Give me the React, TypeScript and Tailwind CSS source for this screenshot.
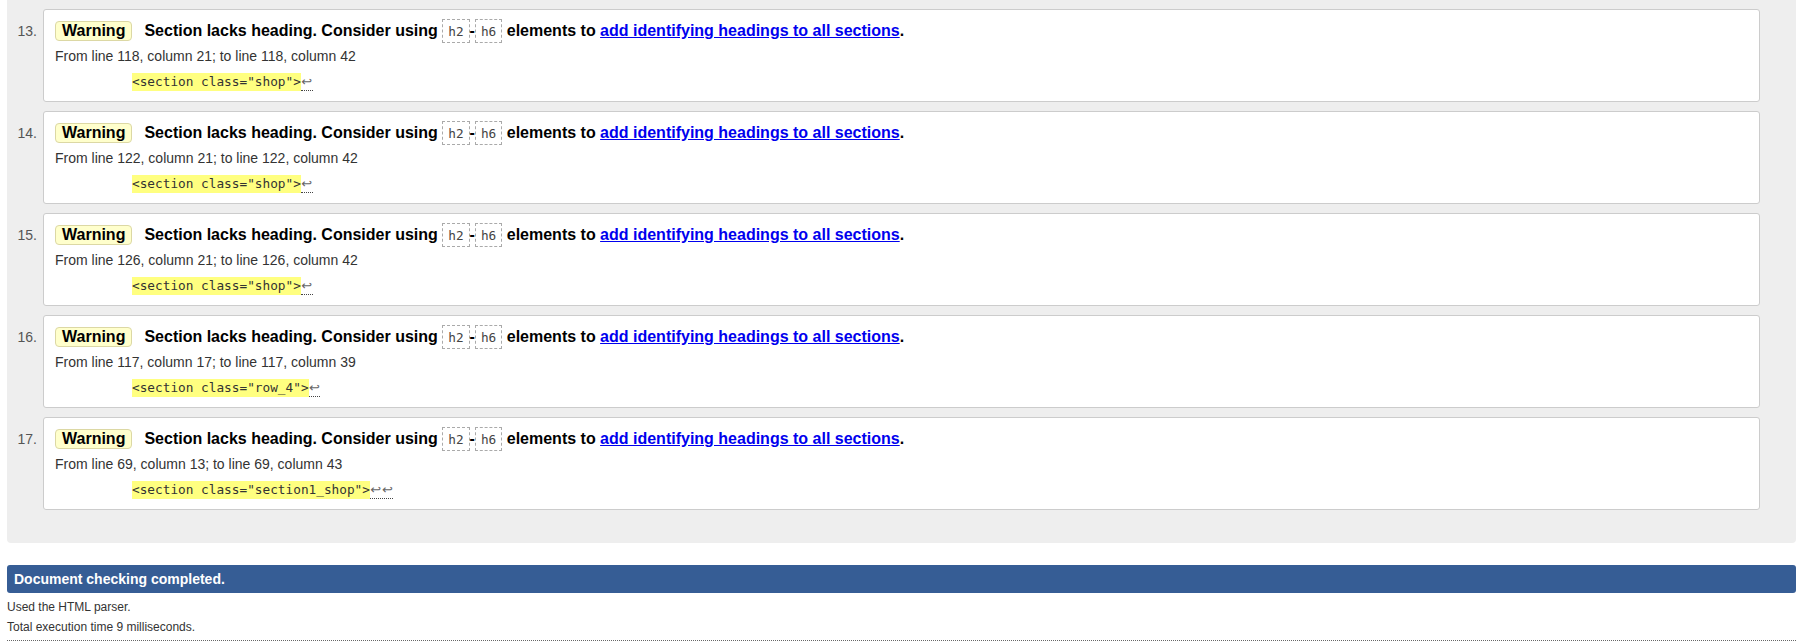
type Message = {
    num: number;
    fromLine: number;
    fromCol: number;
    toLine: number;
    toCol: number;
    cls: string;
    returns: number;
};

const messages: Message[] = [
    { num: 13, fromLine: 118, fromCol: 21, toLine: 118, toCol: 42, cls: "shop", returns: 1 },
    { num: 14, fromLine: 122, fromCol: 21, toLine: 122, toCol: 42, cls: "shop", returns: 1 },
    { num: 15, fromLine: 126, fromCol: 21, toLine: 126, toCol: 42, cls: "shop", returns: 1 },
    { num: 16, fromLine: 117, fromCol: 17, toLine: 117, toCol: 39, cls: "row_4", returns: 1 },
    { num: 17, fromLine: 69, fromCol: 13, toLine: 69, toCol: 43, cls: "section1_shop", returns: 2 },
];

const sans = "font-['Liberation_Sans',Arial,sans-serif]";
const mono = "font-['DejaVu_Sans_Mono','Liberation_Mono',monospace]";

const TagBox = ({ children }: { children: string }) => (
    <code
        className={`inline-block border border-dashed border-[#aaa] px-[5px] pt-[3px] pb-[1px] leading-[18px] text-[12.75px] font-normal text-[#444] ${mono}`}
    >
        {children}
    </code>
);

const MessageRow = ({ msg }: { msg: Message }) => (
    <div className="flex">
        <div className="w-[36px] shrink-0 pt-[10px] pr-[6px] text-right text-[14px] leading-[24px] text-[#555]">
            {msg.num}.
        </div>
        <div className="flex-1 bg-white border border-[#ccc] rounded-[3px] pl-[11px] pt-[9px] pb-[10px]">
            <div className="h-[24px] leading-[24px] text-[16px] font-bold text-black whitespace-nowrap">
                <span className="inline-block bg-[#ffffcc] border border-[#dcd8a4] rounded-[4px] px-[6px] leading-[18px] mr-[12px]">
                    Warning
                </span>
                Section lacks heading. Consider using <TagBox>h2</TagBox>-<TagBox>h6</TagBox> elements to{" "}
                <a href="#" className="text-[#0000ee] underline">
                    add identifying headings to all sections
                </a>
                .
            </div>
            <div className="mt-[3px] text-[14px] leading-[20px] text-[#333]">
                From line {msg.fromLine}, column {msg.fromCol}; to line {msg.toLine}, column {msg.toCol}
            </div>
            <div className="mt-[7px] pl-[77px] h-[18px] flex">
                <span className={`bg-[#ffff80] text-[12.75px] leading-[18px] text-[#333] whitespace-pre ${mono}`}>
                    {`<section class="${msg.cls}">`}
                </span>
                <span className="flex h-[18px] border-b border-dotted border-[#444]">
                    {Array.from({ length: msg.returns }).map((_, i) => (
                        <span
                            key={i}
                            className="w-[11.7px] text-center text-[13px] leading-[17px] text-[#666] font-['DejaVu_Sans',sans-serif]"
                        >
                            ↩
                        </span>
                    ))}
                </span>
            </div>
        </div>
    </div>
);

export default function App() {
    return (
        <div className={`w-[1813px] h-[642px] overflow-hidden bg-white ${sans}`}>
            <div className="ml-[7px] w-[1789px] -mt-[93px] bg-[#eeeeee] rounded-b-[4px] pr-[36px] pb-[33px] flex flex-col gap-[9px]">
                {/* previous message, scrolled out of view */}
                <div className="ml-[36px] h-[93px] bg-white border border-[#ccc] rounded-[3px]" />
                {messages.map((m) => (
                    <MessageRow key={m.num} msg={m} />
                ))}
            </div>

            <div className="mt-[22px] ml-[7px] w-[1789px] h-[28px] bg-[#365d95] rounded-[3px] px-[7px] text-white font-bold text-[14px] leading-[28px]">
                Document checking completed.
            </div>
            <div className="ml-[7px] w-[1789px] pt-[4px] pb-[3px] text-[12px] leading-[20px] text-[#333] border-b border-dotted border-[#666]">
                <p>Used the HTML parser.</p>
                <p>Total execution time 9 milliseconds.</p>
            </div>
        </div>
    );
}
